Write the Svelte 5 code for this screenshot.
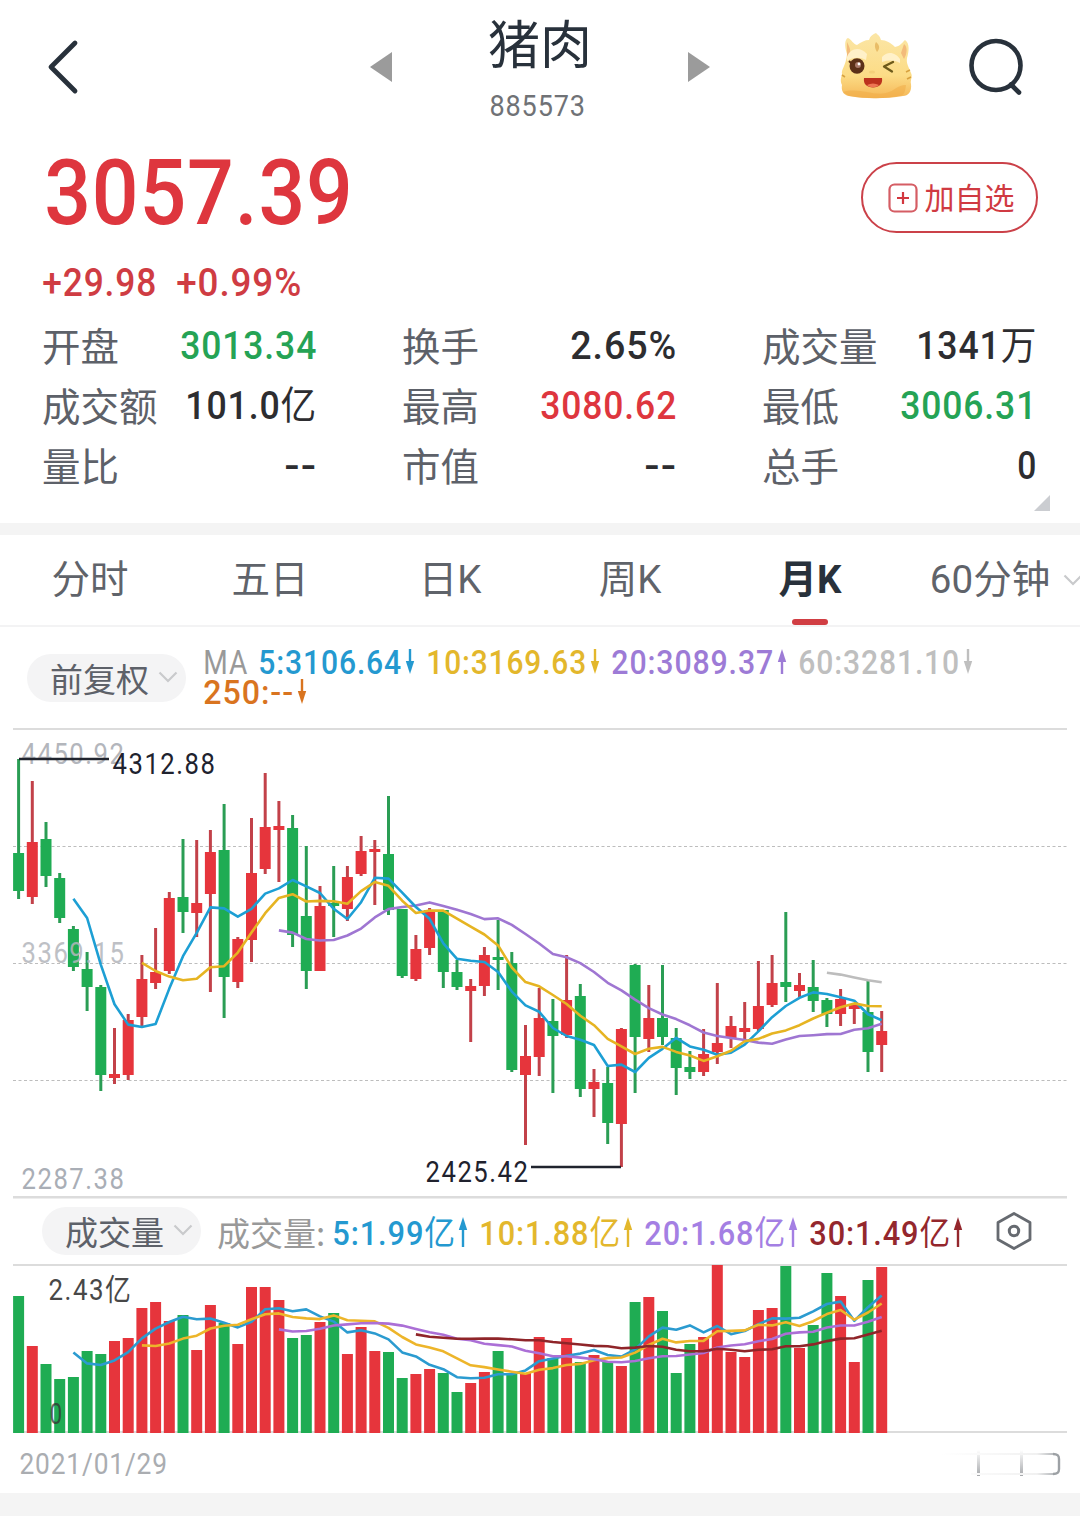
<script lang="ts">
	type Candle = [dir: 'r' | 'g', high: number, top: number, bottom: number, low: number, volume: number];

	const RED = '#e6353c';
	const GREEN = '#1fac53';

	const stats = [
		{ label: '开盘', value: '3013.34', width: 135, tone: 'down' },
		{ label: '换手', value: '2.65%', width: 105, tone: '' },
		{ label: '成交量', value: '1341', unit: '万', width: 119, tone: '' },
		{ label: '成交额', value: '101.0', unit: '亿', width: 130, tone: '' },
		{ label: '最高', value: '3080.62', width: 135, tone: 'up' },
		{ label: '最低', value: '3006.31', width: 135, tone: 'down' },
		{ label: '量比', value: '--', width: 31, tone: '' },
		{ label: '市值', value: '--', width: 31, tone: '' },
		{ label: '总手', value: '0', width: 18, tone: '' }
	];

	const tabs = ['分时', '五日', '日K', '周K', '月K', '60分钟'];
	let activeTab = $state('月K');

	const priceLegend = [
		{ text: '5:3106.64', width: 142, color: '#2499d0', up: false },
		{ text: '10:3169.63', width: 159, color: '#e3b72c', up: false },
		{ text: '20:3089.37', width: 161, color: '#9d7bd6', up: true },
		{ text: '60:3281.10', width: 160, color: '#bfbfbf', up: false }
	];

	const volumeLegend = [
		{ text: '5:1.99', width: 122, color: '#2499d0', up: true },
		{ text: '10:1.88', width: 140, color: '#e3b72c', up: true },
		{ text: '20:1.68', width: 140, color: '#a47fe3', up: true },
		{ text: '30:1.49', width: 140, color: '#94272d', up: true }
	];

	// chart units: y grows downwards, one unit per pixel
	const candles: Candle[] = [
		['g', 759, 853, 891, 899, 1296], ['r', 781, 842, 897, 904, 1346], ['g', 822, 839, 876, 887, 1364], ['g', 873, 878, 918, 923, 1379],
		['g', 926, 929, 967, 971, 1377], ['g', 952, 969, 987, 1011, 1351], ['g', 985, 987, 1075, 1091, 1354], ['r', 1028, 1074, 1078, 1084, 1341],
		['r', 1014, 1020, 1075, 1080, 1338], ['r', 955, 979, 1017, 1026, 1308], ['r', 928, 972, 983, 989, 1302], ['r', 892, 898, 971, 974, 1321],
		['g', 839, 897, 912, 933, 1315], ['r', 840, 903, 913, 937, 1350], ['r', 830, 852, 894, 992, 1305], ['g', 804, 850, 977, 1018, 1323],
		['r', 937, 939, 982, 988, 1344], ['r', 818, 873, 940, 962, 1287], ['r', 773, 827, 869, 874, 1287], ['r', 801, 826, 830, 882, 1300],
		['g', 815, 828, 935, 947, 1338], ['g', 846, 916, 971, 989, 1335], ['r', 886, 906, 971, 971, 1322], ['g', 866, 903, 906, 937, 1313],
		['r', 866, 877, 909, 921, 1354], ['r', 836, 851, 874, 876, 1327], ['r', 840, 849, 852, 905, 1351], ['g', 796, 854, 910, 915, 1352],
		['g', 909, 909, 976, 978, 1378], ['r', 935, 949, 979, 981, 1374], ['r', 908, 910, 948, 955, 1369], ['g', 910, 910, 972, 988, 1373],
		['g', 960, 972, 987, 990, 1392], ['r', 979, 986, 991, 1042, 1383], ['r', 947, 955, 986, 996, 1372], ['g', 920, 957, 960, 990, 1351],
		['g', 952, 963, 1070, 1072, 1373], ['r', 1025, 1056, 1075, 1145, 1373], ['r', 988, 1018, 1057, 1076, 1337], ['g', 999, 1021, 1036, 1093, 1358],
		['r', 955, 1000, 1035, 1038, 1338], ['g', 984, 996, 1089, 1097, 1362], ['r', 1069, 1082, 1089, 1117, 1355], ['g', 1067, 1083, 1123, 1144, 1362],
		['r', 1028, 1029, 1124, 1167, 1366], ['g', 964, 965, 1037, 1093, 1302], ['r', 985, 1018, 1039, 1052, 1297], ['g', 965, 1018, 1037, 1045, 1311],
		['g', 1028, 1038, 1068, 1095, 1373], ['g', 1051, 1067, 1072, 1079, 1344], ['r', 1029, 1054, 1072, 1076, 1337], ['r', 983, 1043, 1052, 1064, 1265],
		['r', 1016, 1026, 1038, 1048, 1352], ['r', 1002, 1028, 1032, 1039, 1357], ['r', 961, 1006, 1029, 1031, 1310], ['r', 955, 983, 1005, 1007, 1308],
		['g', 912, 982, 987, 1002, 1266], ['r', 973, 985, 991, 997, 1348], ['g', 960, 987, 1001, 1012, 1325], ['g', 998, 1000, 1014, 1027, 1273],
		['r', 989, 999, 1014, 1026, 1296], ['r', 1004, 1005, 1009, 1024, 1362], ['g', 980, 1012, 1052, 1072, 1280], ['r', 1011, 1031, 1045, 1072, 1267]
	];

	const closes = candles.map(([dir, , top, bottom]) => (dir === 'r' ? top : bottom));
	const volumes = candles.map((c) => c[5]);

	function x(i: number) {
		return 18.6 + i * 13.7;
	}

	function average(values: number[], n: number) {
		const points: string[] = [];
		for (let i = n - 1; i < values.length; i++) {
			const sum = values.slice(i - n + 1, i + 1).reduce((a, b) => a + b, 0);
			points.push(`${x(i).toFixed(1)},${(sum / n).toFixed(1)}`);
		}
		return points.join(' ');
	}

	const priceLines = [
		{ points: average(closes, 60), color: '#bdbdbd' },
		{ points: average(closes, 20), color: '#9f76d2' },
		{ points: average(closes, 5), color: '#1d9fd4' },
		{ points: average(closes, 10), color: '#e6b422' }
	];

	const volumeLines = [
		{ points: average(volumes, 5), color: '#2b9bd0' },
		{ points: average(volumes, 10), color: '#edb52a' },
		{ points: average(volumes, 20), color: '#ab6fd6' },
		{ points: average(volumes, 30), color: '#8f2529' }
	];
</script>

{#snippet num(text: string, width: number, size: number, weight = 500, unit = '')}
	<svg class="num" {width} height={size}>
		<text
			x={-0.02 * size}
			y={0.856 * size + 1}
			font-size={size}
			font-weight={weight}
			textLength={width + 0.05 * size}
			lengthAdjust="spacingAndGlyphs">{text}{#if unit}<tspan font-weight="400">{unit}</tspan>{/if}</text>
	</svg>
{/snippet}

{#snippet label(text: string, left: number, baseline: number, width: number, fill: string, opacity = 1)}
	<text
		class="axis"
		x={left - 0.5}
		y={baseline}
		font-size="30"
		{fill}
		{opacity}
		textLength={width + 2}
		lengthAdjust="spacingAndGlyphs">{text}</text>
{/snippet}

{#snippet arrow(up: boolean, height: number)}
	<svg class="arrow" class:flip={!up} width="10" {height} viewBox="0 0 10 {height}">
		<path d="M5 6V{height}" stroke="currentColor" stroke-width="2.4" />
		<path d="M5 0L9.2 13H.8z" fill="currentColor" />
	</svg>
{/snippet}

{#snippet chevron()}
	<svg class="chevron" width="20" height="12" viewBox="0 0 20 12">
		<path d="M1.5 1.5L10 10l8.5-8.5" fill="none" stroke="#c9cacc" stroke-width="2.2" />
	</svg>
{/snippet}

<main>
	<header>
		<button class="back" aria-label="返回">
			<svg width="32" height="56" viewBox="0 0 32 56">
				<path d="M28 4L4 28l24 24" fill="none" stroke="#28313b" stroke-width="4.8" stroke-linecap="round" stroke-linejoin="round" />
			</svg>
		</button>
		<svg class="prev" width="22" height="32" viewBox="0 0 22 32"><path d="M22 1v30L0 16z" fill="#9b9b9b" /></svg>
		<div class="name">
			<h1>猪肉</h1>
			{@render num('885573', 95, 30, 400)}
		</div>
		<svg class="next" width="22" height="32" viewBox="0 0 22 32"><path d="M0 1v30l22-15z" fill="#9b9b9b" /></svg>
		<svg class="mascot" width="74" height="70" viewBox="0 0 74 70">
			<defs>
				<linearGradient id="fur" x1="0" y1="0" x2="0" y2="1">
					<stop offset="0" stop-color="#fbe6a6" />
					<stop offset=".65" stop-color="#fcdc86" />
					<stop offset="1" stop-color="#f5b757" />
				</linearGradient>
			</defs>
			<path d="M8 22C5 13 6 7 9 6c4 2 5 6 9 7 4-3 8-5 12-5 1-4 4-6 7-7 2 2 4 3 5 7 5 0 10 3 14 7 5-1 7-4 10-7 5 3 4 12 2 18-1 6 2 9 4 15 2 4-1 7 0 11 1 8-3 12-8 12-18 3-36 3-54 0-6-1-8-6-7-11-2-4-1-7 0-11-1-5 4-8 5-20z" fill="url(#fur)" />
			<path d="M8 10c2 4 4 8 3 12l-3 4zM65 12c4 3 3 10 0 15l-3-6z" fill="#f3bb7b" />
			<path d="M37 10c4 3 4 7 1 10-2-3-3-7-1-10z" fill="#e9bd68" />
			<path d="M8 25c3-9 13-11 20-3l-1 6c-6-3-13-3-19 1zM43 25c6-7 14-4 18 2v4c-6-3-12-3-18-1z" fill="#fff1c9" />
			<path d="M4 60c15-5 30 4 43 1 9-2 11-8 20-8-1 9-3 11-8 11-16 3-33 3-49 0z" fill="#f0a944" opacity=".5" />
			<path d="M67 40l4-2M68 47l4-2M3 43l3 2" stroke="#d8a240" stroke-width="1.6" />
			<ellipse cx="18" cy="34" rx="7.5" ry="7.8" fill="#5b3018" />
			<circle cx="19" cy="33" r="3" fill="#a8796a" />
			<circle cx="20" cy="32" r="1.4" fill="#fff" />
			<path d="M10 29l3 3" stroke="#5b3018" stroke-width="2" />
			<path d="M54 30l-9 4.500 8 5" fill="none" stroke="#6d5a1b" stroke-width="2.3" stroke-linecap="round" stroke-linejoin="round" />
			<ellipse cx="33" cy="40" rx="3" ry="1.600" fill="#f4d07a" />
			<path d="M25 46h18c1 6-3 9.500-9 9.500S24 52 25 46z" fill="#bc321d" />
			<path d="M28 53c4-2 8-2 12 0-3 3-9 3-12 0z" fill="#ee7654" />
		</svg>
		<button class="search" aria-label="搜索">
			<svg width="56" height="60" viewBox="0 0 56 60">
				<circle cx="28" cy="28.500" r="24.500" fill="none" stroke="#28313b" stroke-width="4.600" />
				<path d="M43 47.500l8 8" stroke="#28313b" stroke-width="4.600" stroke-linecap="round" />
			</svg>
		</button>
	</header>

	<section class="quote">
		<div class="headline">
			<div class="up">{@render num('3057.39', 305, 91)}</div>
			<button class="add">
				<svg width="30" height="30" viewBox="0 0 30 30" fill="none" stroke="#d55d64" stroke-width="2.2">
					<rect x="1.500" y="1.500" width="27" height="27" rx="5" />
					<path d="M15 9v12M9 15h12" stroke="#d2363e" />
				</svg>
				<span>加自选</span>
			</button>
		</div>
		<div class="change">
			{@render num('+29.98', 113, 39)}
			{@render num('+0.99%', 124, 39)}
		</div>
		<dl class="stats">
			{#each stats as stat}
				<div class="stat">
					<dt>{stat.label}</dt>
					<dd class={stat.tone}>{@render num(stat.value, stat.width, 39, 500, stat.unit)}</dd>
				</div>
			{/each}
		</dl>
		<svg class="corner" width="18" height="18" viewBox="0 0 18 18"><path d="M17 1v16H1z" fill="#cbcdd1" /></svg>
	</section>

	<nav>
		{#each tabs as tab}
			<button class="tab" class:active={tab === activeTab} onclick={() => (activeTab = tab)}>
				{tab}
				{#if tab === '60分钟'}{@render chevron()}{/if}
			</button>
		{/each}
	</nav>

	<div class="toolbar">
		<button class="pill">前复权 {@render chevron()}</button>
		<div class="legends">
			<div class="legend">
				<span class="muted">{@render num('MA', 43, 34, 400)}</span>
				{#each priceLegend as item}
					<span class="entry" style="color: {item.color}">
						{@render num(item.text, item.width, 34)}{@render arrow(item.up, 25)}
					</span>
				{/each}
			</div>
			<div class="legend">
				<span class="entry long">{@render num('250:--', 89, 34)}{@render arrow(false, 25)}</span>
			</div>
		</div>
	</div>

	<svg class="chart" width="1080" height="471" viewBox="0 728 1080 471">
		<path d="M13 729h1054" stroke="#dcdcdc" stroke-width="2" />
		<path d="M13 1197.300h1054" stroke="#dcdcdc" stroke-width="2.600" />
		<path d="M13 846.500h1054M13 963.500h1054M13 1080.500h1054" stroke="#bdbdbd" stroke-dasharray="3 2.500" />
		{@render label('4450.92', 22, 764, 102, '#b3b6bc')}
		{@render label('2287.38', 22, 1189, 102, '#a9aeb6')}
		{#each candles as [dir, high, top, bottom, low], i}
			<path d="M{x(i)} {high}V{low}" stroke={dir === 'r' ? '#c24149' : '#2a9d54'} stroke-width="3" />
			<rect x={x(i) - 5.5} y={top} width="11" height={bottom - top} fill={dir === 'r' ? RED : GREEN} />
		{/each}
		{@render label('3369.15', 22, 963, 102, '#b3b6bc', 0.85)}
		{#each priceLines as line}
			<polyline points={line.points} fill="none" stroke={line.color} stroke-width="2.600" stroke-linejoin="round" />
		{/each}
		<path d="M19 759h90M531 1167h90" stroke="#20242e" stroke-width="2.600" />
		{@render label('4312.88', 113, 774, 102, '#20222e')}
		{@render label('2425.42', 426, 1182, 102, '#20222e')}
	</svg>

	<div class="toolbar volume">
		<button class="pill">成交量 {@render chevron()}</button>
		<div class="legend">
			<span class="caption">成交量:</span>
			{#each volumeLegend as item}
				<span class="entry" style="color: {item.color}">
					{@render num(item.text, item.width, 34, 500, '亿')}{@render arrow(item.up, 30)}
				</span>
			{/each}
		</div>
		<svg class="settings" width="38" height="40" viewBox="0 0 38 40" fill="none" stroke="#666a70" stroke-linejoin="round">
			<path d="M19 2.500l16 9v17l-16 9-16-9v-17z" stroke-width="2.800" />
			<circle cx="19" cy="20" r="4.700" stroke-width="3" />
		</svg>
	</div>

	<svg class="chart" width="1080" height="170" viewBox="0 1264 1080 170">
		<path d="M13 1265h1054M13 1432h1054" stroke="#dcdcdc" stroke-width="2" />
		{#each candles as [dir, , , , , volume], i}
			<rect x={x(i) - 5.5} y={volume} width="11" height={1433 - volume} fill={dir === 'r' ? RED : GREEN} />
		{/each}
		{#each volumeLines as line}
			<polyline points={line.points} fill="none" stroke={line.color} stroke-width="2.600" stroke-linejoin="round" />
		{/each}
		{@render label('2.43亿', 49, 1300, 82, '#484848')}
		{@render label('0', 50, 1424, 12, '#333', 0.75)}
	</svg>

	<footer>
		<span>{@render num('2021/01/29', 147, 30, 400)}</span>
		<svg width="150" height="32" viewBox="0 0 150 32" fill="none">
			<defs>
				<linearGradient id="fade-down" x1="0" y1="0" x2="0" y2="1">
					<stop offset="0" stop-color="#fff" />
					<stop offset="1" stop-color="#a6a8ab" />
				</linearGradient>
				<linearGradient id="fade-right" x1="0" y1="0" x2="1" y2="0">
					<stop offset="0" stop-color="#fff" />
					<stop offset=".85" stop-color="#f1f1f1" />
					<stop offset="1" stop-color="#b5b8bb" />
				</linearGradient>
			</defs>
			<path d="M66 2h3v26h-3zM109 2h3v26h-3z" fill="url(#fade-down)" />
			<path d="M30 5h113v2H30zM60 25h83v2H60z" fill="url(#fade-right)" />
			<path d="M142 6c5 0 6 2 6 5v10c0 3-1 5-6 5" stroke="#9da1a5" stroke-width="2.400" />
		</svg>
	</footer>
	<div class="gap"></div>
</main>

<style>
	:global(body) {
		margin: 0;
		background: #fff;
	}

	main {
		width: 1080px;
		height: 1525px;
		overflow: hidden;
		background: #fff;
		color: #2d2d30;
		font-family: 'Noto Sans CJK SC', sans-serif;
	}

	button {
		padding: 0;
		border: none;
		background: none;
		font: inherit;
		color: inherit;
		cursor: pointer;
	}

	svg {
		display: block;
		flex-shrink: 0;
	}

	.num,
	.axis {
		overflow: visible;
		font-family: Roboto, 'Noto Sans CJK SC', sans-serif;
		letter-spacing: 0.06em;
	}

	.num {
		fill: currentColor;
	}

	header {
		display: flex;
		align-items: center;
		height: 134px;
	}

	.back {
		margin-left: 47px;
	}

	.prev {
		margin-left: 291px;
	}

	.name {
		display: flex;
		flex-direction: column;
		align-items: center;
		width: 140px;
		height: 134px;
		margin: 0 78px;
		color: #707276;
	}

	h1 {
		margin: 4px 0 9px;
		font-size: 52px;
		font-weight: 400;
		line-height: 76px;
		color: #28313b;
	}

	.name .num {
		margin-right: 6px;
	}

	.mascot {
		margin-left: 129px;
	}

	.search {
		margin-left: 55px;
	}

	.quote {
		position: relative;
		box-sizing: border-box;
		height: 401px;
		padding: 12px 42px 0 43px;
		border-bottom: 12px solid #f4f4f4;
	}

	.headline {
		display: flex;
		justify-content: space-between;
		align-items: flex-start;
		height: 91px;
		padding-left: 3px;
	}

	.up {
		color: #de363e;
	}

	.down {
		color: #25a355;
	}

	.headline .up {
		margin-top: -1px;
	}

	.add {
		display: flex;
		align-items: center;
		justify-content: center;
		gap: 7px;
		box-sizing: border-box;
		width: 177px;
		height: 71px;
		margin-top: 16px;
		padding-left: 3px;
		border: 2px solid #cb4149;
		border-radius: 36px;
		font-size: 30px;
		color: #d03a42;
	}

	.add span {
		margin-top: -4px;
	}

	.change {
		display: flex;
		gap: 21px;
		margin-top: 25px;
		color: #cf3c43;
	}

	.stats {
		display: grid;
		grid-template-columns: repeat(3, 274px);
		grid-auto-rows: 60px;
		column-gap: 86px;
		margin: 13px 0 0 -1px;
	}

	.stat {
		display: flex;
		align-items: center;
		justify-content: space-between;
	}

	dt {
		font-size: 38.5px;
		line-height: 60px;
		color: #5d6169;
	}

	dd {
		margin: 0;
	}

	.corner {
		position: absolute;
		right: 29px;
		bottom: 11px;
	}

	nav {
		display: flex;
		box-sizing: border-box;
		width: 1080px;
		height: 92px;
		border-bottom: 2px solid #f3f3f4;
	}

	.tab {
		position: relative;
		flex: 0 0 180px;
		font-family: Roboto, 'Noto Sans CJK SC', sans-serif;
		font-size: 38.5px;
		line-height: 90px;
		color: #5f636a;
	}

	.tab .chevron {
		position: absolute;
		left: 163px;
		top: 39px;
	}

	.tab.active {
		font-weight: 700;
		color: #28313b;
	}

	.tab.active::after {
		content: '';
		position: absolute;
		left: 72px;
		bottom: 0;
		width: 36px;
		height: 6px;
		border-radius: 3px;
		background: #d13e43;
	}

	.toolbar {
		display: flex;
		align-items: flex-start;
		box-sizing: border-box;
		height: 101px;
		padding: 18px 0 0 27px;
	}

	.pill {
		display: flex;
		align-items: center;
		justify-content: space-between;
		box-sizing: border-box;
		flex-shrink: 0;
		width: 159px;
		height: 48px;
		margin-top: 9px;
		padding: 0 8px 0 23px;
		border-radius: 24px;
		background: #f4f4f5;
		font-size: 33px;
		line-height: 48px;
		color: #5d6169;
	}

	.pill .chevron {
		margin-top: -2px;
	}

	.legends {
		display: flex;
		flex-direction: column;
		margin: 1px 0 0 18px;
	}

	.legend {
		display: flex;
		align-items: center;
		gap: 12px;
		height: 30px;
	}

	.entry {
		display: flex;
		align-items: center;
		gap: 4px;
	}

	.long {
		color: #d9741f;
	}

	.muted {
		color: #999;
	}

	.flip {
		transform: scaleY(-1);
	}

	.volume {
		align-items: center;
		height: 65px;
		padding: 0 0 0 42px;
	}

	.volume .pill {
		margin-top: -1px;
	}

	.volume .legend {
		margin-left: 16px;
	}

	.volume .entry {
		gap: 3px;
	}

	.caption {
		width: 104px;
		font-size: 33px;
		line-height: 30px;
		white-space: nowrap;
		color: #999;
	}

	.settings {
		margin: -2px 0 0 32px;
	}

	footer {
		display: flex;
		align-items: center;
		justify-content: space-between;
		height: 59px;
		padding: 0 19px 0 20px;
		color: #aaadb1;
	}

	footer .num {
		margin-top: -3px;
	}

	.gap {
		height: 23px;
		background: #f4f4f4;
	}
</style>
